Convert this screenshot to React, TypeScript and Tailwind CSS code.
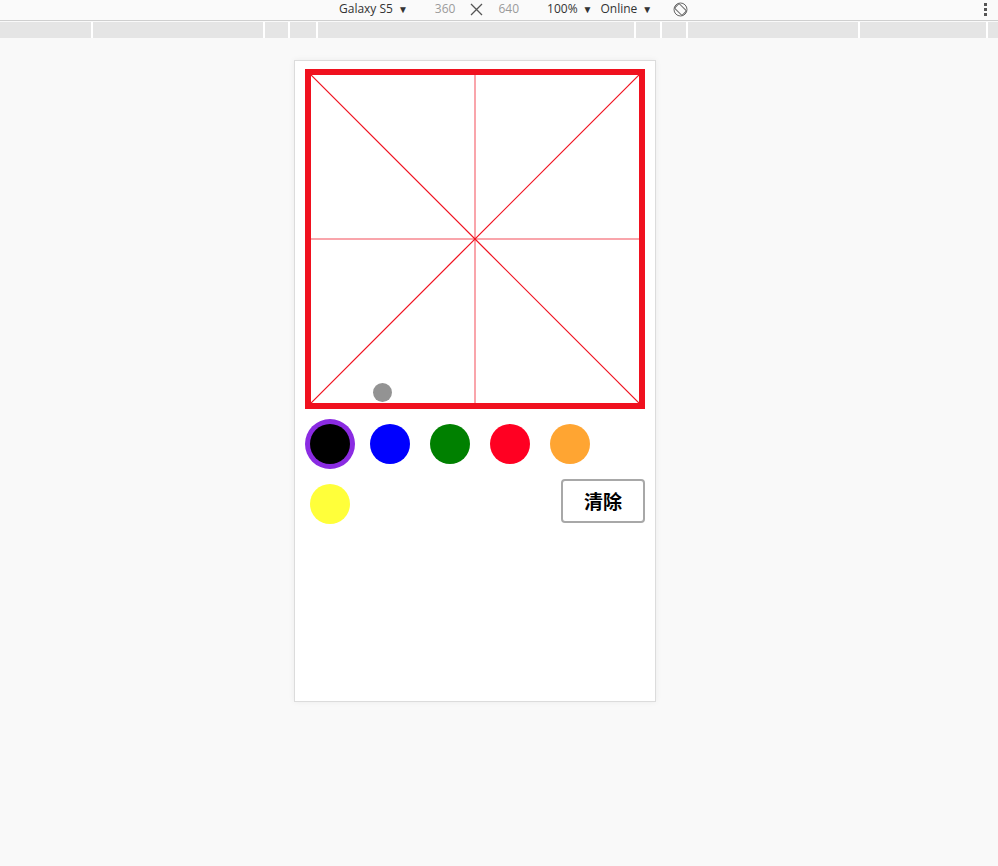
import React from "react";

const colors = ["#000000", "#0000ff", "#008000", "#ff0022", "#ffa532"];

const rulerSegs = [91, 170, 23, 26, 316, 24, 24, 170, 126, 10];

function Caret() {
  return <span className="ml-[5px] text-[10px] leading-none text-[#333]">▼</span>;
}

function Toolbar() {
  return (
    <div className="h-[21px] border-b border-[#cfcfcf] bg-[#fafafa] relative flex items-center text-[12px] text-[#333]" style={{ fontFamily: "'Open Sans', sans-serif" }}>
      <div className="flex items-center ml-[339px] -mt-[2px]">
        <span>Galaxy S5</span>
        <Caret />
        <span className="ml-[27px] text-[#9a9a9a]">360</span>
        <svg className="ml-[15px]" width="13" height="13" viewBox="0 0 13 13">
          <path d="M1 1L12 12M12 1L1 12" stroke="#555" strokeWidth="1.3" fill="none" />
        </svg>
        <span className="ml-[15px] text-[#9a9a9a]">640</span>
        <span className="ml-[28px]">100%</span>
        <Caret />
        <span className="ml-[8px]">Online</span>
        <Caret />
        <svg className="ml-[21px]" width="15" height="15" viewBox="0 0 15 15">
          <circle cx="7.5" cy="7.5" r="6.5" stroke="#666" strokeWidth="1" fill="none" />
          <rect x="4.3" y="2.3" width="6.4" height="10.4" rx="1" transform="rotate(-45 7.5 7.5)" stroke="#666" strokeWidth="1" fill="#fafafa" />
        </svg>
      </div>
      <div className="absolute right-[11px] top-[3px] flex flex-col gap-[2px]">
        <span className="w-[3px] h-[3px] bg-[#555]" />
        <span className="w-[3px] h-[3px] bg-[#555]" />
        <span className="w-[3px] h-[3px] bg-[#555]" />
      </div>
    </div>
  );
}

function Grid() {
  return (
    <div className="relative w-[340px] h-[340px] border-[6px] border-[#f0111f] bg-white">
      <svg width="328" height="328" viewBox="0 0 328 328" className="block">
        <line x1="164" y1="0" x2="164" y2="328" stroke="#f0111f" strokeOpacity="0.5" strokeWidth="1.5" />
        <line x1="0" y1="164" x2="328" y2="164" stroke="#f0111f" strokeOpacity="0.5" strokeWidth="1.5" />
        <line x1="0" y1="0" x2="328" y2="328" stroke="#f0111f" strokeWidth="1.2" />
        <line x1="0" y1="328" x2="328" y2="0" stroke="#f0111f" strokeWidth="1.2" />
      </svg>
      <div className="absolute left-[62px] top-[308px] w-[19px] h-[19px] rounded-full bg-[#939393]" />
    </div>
  );
}

export default function App() {
  return (
    <div className="min-h-[866px] bg-[#f9f9f9]" style={{ fontFamily: "'Noto Sans', 'Noto Sans CJK SC', sans-serif" }}>
      <Toolbar />
      <div className="mt-[1px] flex gap-[2px] bg-white h-[16px]">
        {rulerSegs.map((w, i) => (
          <div key={i} className="h-full bg-[#e5e5e5]" style={{ width: w }} />
        ))}
      </div>
      <div className="ml-[294px] mt-[22px] w-[362px] h-[642px] border border-[#dcdcdc] bg-white shadow-[0_0_6px_rgba(0,0,0,0.06)] px-[10px] pt-[8px]">
        <Grid />
        <div className="mt-[15px] flex gap-5 pl-[5px]">
          {colors.map((c, i) => (
            <div
              key={c}
              className={"w-10 h-10 rounded-full " + (i === 0 ? "ring-[5px] ring-[#8a2be2]" : "")}
              style={{ background: c }}
            />
          ))}
        </div>
        <div className="mt-[15px] flex items-start justify-between pl-[5px]">
          <div className="mt-[5px] w-10 h-10 rounded-full bg-[#ffff3a]" />
          <button className="w-[84px] h-[44px] border-2 border-[#a8a8a8] rounded-[4px] bg-white text-[19px] font-bold text-black" style={{ fontFamily: "'Noto Sans CJK SC', sans-serif" }}>
            清除
          </button>
        </div>
      </div>
    </div>
  );
}
